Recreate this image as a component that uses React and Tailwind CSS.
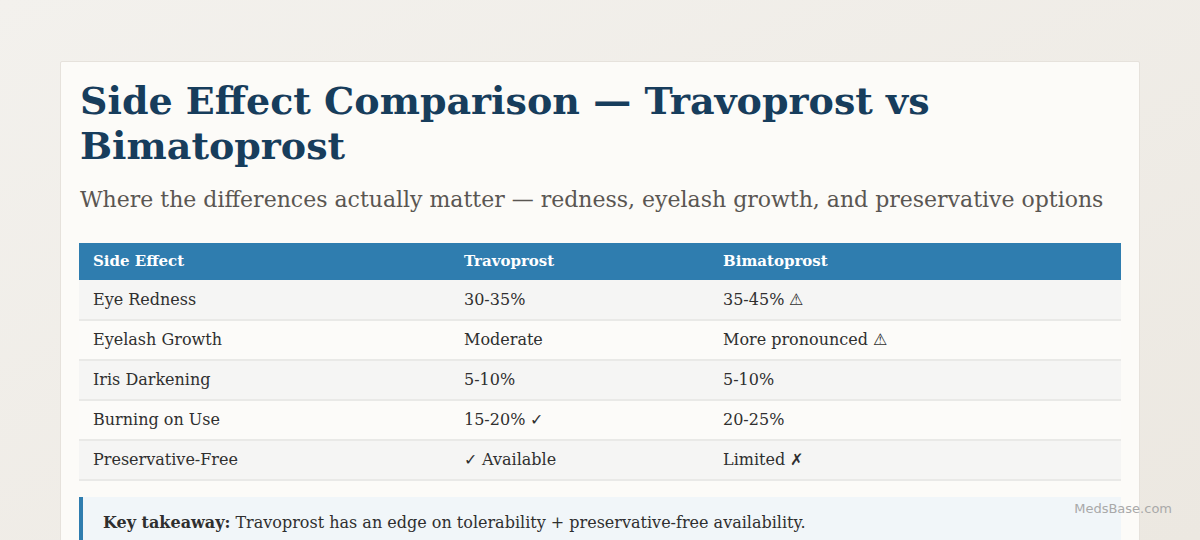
import React from 'react';

const rows = [
    ['Eye Redness', '30-35%', '35-45% ⚠'],
    ['Eyelash Growth', 'Moderate', 'More pronounced ⚠'],
    ['Iris Darkening', '5-10%', '5-10%'],
    ['Burning on Use', '15-20% ✓', '20-25%'],
    ['Preservative-Free', '✓ Available', 'Limited ✗'],
];

const App = () => {
    return (
        <div className="relative w-[1200px] h-[540px] overflow-hidden bg-gradient-to-br from-[#f3f1ed] to-[#ece8e1] pt-[61px] px-[60px] font-['DejaVu_Serif',serif]">
            <div className="bg-[#fcfbf8] border border-[#e6e2dc] rounded-[2px] px-[18px] pt-[16px] h-[600px]">
                <h1 className="text-[38px] leading-[45px] font-bold text-[#173d5c] pl-[1px]">
                    Side Effect Comparison — Travoprost vs Bimatoprost
                </h1>
                <p className="mt-[16px] text-[22px] leading-[32px] text-[#5a5652] pl-[1px]">
                    Where the differences actually matter — redness, eyelash growth, and preservative options
                </p>

                <table className="mt-[27px] w-full border-collapse text-[16px] text-[#2f2f2f]">
                    <thead>
                        <tr className="bg-[#2f7daf] text-white">
                            <th className="text-left font-bold text-[15px] h-[37px] pl-[14px] w-[371px]">Side Effect</th>
                            <th className="text-left font-bold text-[15px] pl-[14px] w-[259px]">Travoprost</th>
                            <th className="text-left font-bold text-[15px] pl-[14px]">Bimatoprost</th>
                        </tr>
                    </thead>
                    <tbody>
                        {rows.map((r, i) => (
                            <tr key={r[0]} className={`border-b-2 border-[#e9e9e7] ${i % 2 === 0 ? 'bg-[#f5f5f4]' : 'bg-[#fcfbf9]'}`}>
                                <td className="h-[40px] pl-[14px]">{r[0]}</td>
                                <td className="pl-[14px]">{r[1]}</td>
                                <td className="pl-[14px]">{r[2]}</td>
                            </tr>
                        ))}
                    </tbody>
                </table>

                <div className="mt-[16px] border-l-4 border-[#2f7daf] bg-[#f1f6f9] pl-[20px] py-[14px] text-[16px] text-[#2f2f2f]">
                    <b>Key takeaway:</b> Travoprost has an edge on tolerability + preservative-free availability.
                </div>
            </div>

            <div className="absolute right-[28px] top-[499px] text-[13px] text-[#a9a9a9] font-['DejaVu_Sans',sans-serif]">
                MedsBase.com
            </div>
        </div>
    );
};

export default App;
